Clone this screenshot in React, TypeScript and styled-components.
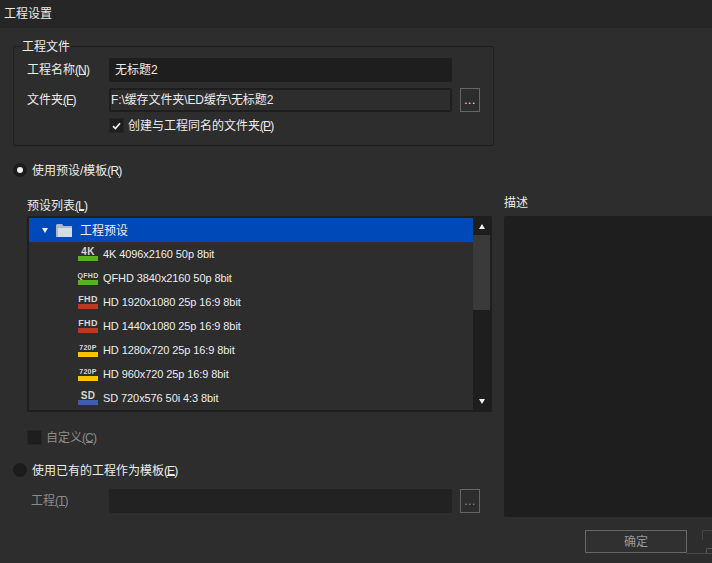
import React from 'react';
import styled, { createGlobalStyle } from 'styled-components';

const FONT = '"Liberation Sans", "Noto Sans CJK SC", sans-serif';

const GlobalStyle = createGlobalStyle`
  html, body {
    margin: 0;
    padding: 0;
    background: #2d2d2d;
  }
  * { box-sizing: border-box; }
`;

const Dialog = styled.div`
  position: relative;
  width: 712px;
  height: 563px;
  overflow: hidden;
  background: #2d2d2d;
  color: #ececec;
  font-family: ${FONT};
  font-size: 12px;
  line-height: 14px;
`;

const TitleBar = styled.div`
  height: 28px;
  padding: 7px 4px 0;
  background: #262626;
  color: #ececec;
`;

const Body = styled.div`
  display: grid;
  grid-template-columns: 479px 208px;
  column-gap: 12px;
  padding-left: 13px;
  height: 489px;
`;

const LeftColumn = styled.div`
  display: flex;
  flex-direction: column;
  padding-top: 11px;
`;

const RightColumn = styled.div`
  display: flex;
  flex-direction: column;
  padding-top: 167px;
`;

const Group = styled.fieldset`
  margin: 0;
  height: 107px;
  padding: 5px 13px 0;
  border: 1px solid #1e1e1e;
  border-radius: 2px;
`;

const Legend = styled.legend`
  margin-left: -5px;
  padding: 1px 0 0;
  height: 14px;
  line-height: 14px;
  color: #ececec;
`;

const FieldRow = styled.div<{ $indent?: number; $top?: number }>`
  display: grid;
  grid-template-columns: 74px 343px 20px;
  column-gap: 8px;
  align-items: center;
  height: 24px;
  margin-top: ${p => p.$top || 0}px;
  margin-bottom: 6px;
  padding-left: ${p => p.$indent || 0}px;
`;

const FieldLabel = styled.label<{ $muted?: boolean; $inset?: number }>`
  padding-left: ${p => p.$inset || 0}px;
  color: ${p => (p.$muted ? '#8c8c8c' : '#ececec')};
`;

// the "(N)" access key after a label, set tighter than the label itself
const Mnemonic = styled.span`
  letter-spacing: -0.9px;
  text-decoration: underline;
  text-decoration-thickness: 1px;
  text-underline-offset: 0;
`;

const Input = styled.div<{ $framed?: boolean; $dim?: boolean }>`
  display: flex;
  align-items: center;
  height: 24px;
  padding-left: ${p => (p.$framed ? '0' : '6px')};
  background: ${p => (p.$framed ? 'transparent' : p.$dim ? '#222222' : '#1e1e1e')};
  border: ${p => (p.$framed ? '2px solid #1e1e1e' : 'none')};
  border-radius: 2px;
  color: #ececec;
  letter-spacing: ${p => (p.$framed ? '-0.1px' : '0')};
  white-space: nowrap;
`;

const BrowseButton = styled.button<{ $muted?: boolean }>`
  width: 20px;
  height: 24px;
  padding: 0;
  background: transparent;
  border: 1px solid #666666;
  color: ${p => (p.$muted ? '#8c8c8c' : '#ececec')};
  font-family: ${FONT};
  font-size: 12px;
  letter-spacing: 0.5px;
  line-height: 14px;
`;

const CheckRow = styled.div<{ $muted?: boolean; $left?: number; $top?: number }>`
  display: flex;
  align-items: center;
  gap: 4px;
  height: 15px;
  margin-left: ${p => p.$left || 0}px;
  margin-top: ${p => p.$top || 0}px;
  color: ${p => (p.$muted ? '#8c8c8c' : '#ececec')};
`;

const RowText = styled.span`
  padding-top: 1px;
`;

const CheckBox = styled.span`
  display: flex;
  align-items: center;
  justify-content: center;
  width: 15px;
  height: 15px;
  background: #1e1e1e;
  border: 1px solid #262626;
`;

const RadioRow = styled.div<{ $top: number }>`
  display: flex;
  align-items: center;
  gap: 5px;
  height: 14px;
  margin-top: ${p => p.$top}px;
`;

const Radio = styled.span`
  display: flex;
  align-items: center;
  justify-content: center;
  width: 14px;
  height: 14px;
  border-radius: 50%;
  background: #1c1c1c;
`;

const RadioDot = styled.span`
  width: 6px;
  height: 6px;
  border-radius: 50%;
  background: #f0f0f0;
`;

const ListLabel = styled.div`
  margin: 22px 0 3px 14px;
  height: 14px;
`;

const ListBox = styled.div`
  display: flex;
  width: 465px;
  height: 196px;
  margin-left: 14px;
  padding: 2px;
  background: #1e1e1e;
  border-radius: 2px;
`;

const Rows = styled.div`
  flex: 1;
  background: #2d2d2d;
`;

const FolderRow = styled.div`
  display: flex;
  align-items: center;
  height: 24px;
  padding-left: 13px;
  background: #0049b8;
  color: #f0f0f0;
`;

const Arrow = styled.span<{ $down?: boolean }>`
  width: 0;
  height: 0;
  border-left: 3.5px solid transparent;
  border-right: 3.5px solid transparent;
  ${p => (p.$down ? 'border-top: 5px solid #f0f0f0;' : 'border-bottom: 5px solid #f0f0f0;')}
`;

const FolderIcon = styled.svg`
  margin: 0 8px;
`;

const PresetRow = styled.div`
  display: flex;
  align-items: center;
  height: 24px;
  padding-left: 49px;
  color: #ececec;
  font-size: 11px;
  letter-spacing: -0.09px;
  white-space: nowrap;
`;

const Badge = styled.span`
  display: flex;
  flex-direction: column;
  align-items: center;
  width: 20px;
  height: 14px;
  margin-right: 5px;
`;

const BadgeText = styled.span<{ $size: number }>`
  height: 9px;
  color: #d8d8d8;
  font-size: ${p => p.$size}px;
  font-weight: 700;
  letter-spacing: 0.3px;
  line-height: 9px;
`;

const BadgeBar = styled.span<{ $color: string }>`
  flex: none;
  width: 20px;
  height: 5px;
  background: ${p => p.$color};
`;

const ScrollBar = styled.div`
  display: flex;
  flex-direction: column;
  width: 17px;
`;

const ScrollButton = styled.div`
  display: flex;
  align-items: center;
  justify-content: center;
  height: 17px;
`;

const ScrollThumb = styled.div`
  height: 75px;
  background: #3a3a3a;
`;

const ScrollTrack = styled.div`
  flex: 1;
`;

const DescriptionLabel = styled.div`
  height: 14px;
  margin: 1px 0 6px;
`;

const DescriptionPanel = styled.div`
  height: 301px;
  background: #1e1e1e;
  border-radius: 2px 0 0 2px;
`;

const Footer = styled.div`
  display: flex;
  justify-content: flex-end;
  padding: 13px 25px 0 0;
`;

const ConfirmButton = styled.button`
  width: 102px;
  height: 23px;
  padding: 1px 0 0;
  background: #303030;
  border: 1px solid #666666;
  color: #999999;
  font-family: ${FONT};
  font-size: 12px;
  line-height: 14px;
`;

const ResizeGrip = styled.svg`
  position: absolute;
  right: 0;
  top: 530px;
`;

const presets = [
  { badge: '4K', size: 10, color: '#5cb01f', name: '4K 4096x2160 50p 8bit' },
  { badge: 'QFHD', size: 7, color: '#5cb01f', name: 'QFHD 3840x2160 50p 8bit' },
  { badge: 'FHD', size: 9, color: '#bb372a', name: 'HD 1920x1080 25p 16:9 8bit' },
  { badge: 'FHD', size: 9, color: '#bb372a', name: 'HD 1440x1080 25p 16:9 8bit' },
  { badge: '720P', size: 7, color: '#f7c400', name: 'HD 1280x720 25p 16:9 8bit' },
  { badge: '720P', size: 7, color: '#f7c400', name: 'HD 960x720 25p 16:9 8bit' },
  { badge: 'SD', size: 10, color: '#3f5cae', name: 'SD 720x576 50i 4:3 8bit' },
];

export default function App() {
  return (
    <Dialog>
      <GlobalStyle />
      <TitleBar>工程设置</TitleBar>
      <Body>
        <LeftColumn>
          <Group>
            <Legend>工程文件</Legend>
            <FieldRow>
              <FieldLabel>工程名称<Mnemonic>(N)</Mnemonic></FieldLabel>
              <Input>无标题2</Input>
            </FieldRow>
            <FieldRow>
              <FieldLabel>文件夹<Mnemonic>(F)</Mnemonic></FieldLabel>
              <Input $framed>F:\缓存文件夹\ED缓存\无标题2</Input>
              <BrowseButton>...</BrowseButton>
            </FieldRow>
            <CheckRow $left={82}>
              <CheckBox>
                <svg width="9" height="8" viewBox="0 0 9 8">
                  <path d="M1 4.2 L3.4 6.5 L8 1.2" fill="none" stroke="#f0f0f0" strokeWidth="1.7" />
                </svg>
              </CheckBox>
              <RowText>创建与工程同名的文件夹<Mnemonic>(P)</Mnemonic></RowText>
            </CheckRow>
          </Group>

          <RadioRow $top={17}>
            <Radio><RadioDot /></Radio>
            <RowText>使用预设/模板<Mnemonic>(R)</Mnemonic></RowText>
          </RadioRow>

          <ListLabel>预设列表<Mnemonic>(L)</Mnemonic></ListLabel>
          <ListBox>
            <Rows>
              <FolderRow>
                <Arrow $down />
                <FolderIcon width="16" height="13" viewBox="0 0 16 13">
                  <path d="M0 1.5 Q0 0 1.5 0 H6 L7.5 2 H16 V13 H0 Z" fill="#aeb9c8" />
                  <path d="M2 4 H16 V13 H2 Z" fill="#d6dce4" />
                </FolderIcon>
                <RowText>工程预设</RowText>
              </FolderRow>
              {presets.map(p => (
                <PresetRow key={p.name}>
                  <Badge>
                    <BadgeText $size={p.size}>{p.badge}</BadgeText>
                    <BadgeBar $color={p.color} />
                  </Badge>
                  {p.name}
                </PresetRow>
              ))}
            </Rows>
            <ScrollBar>
              <ScrollButton><Arrow /></ScrollButton>
              <ScrollThumb />
              <ScrollTrack />
              <ScrollButton><Arrow $down /></ScrollButton>
            </ScrollBar>
          </ListBox>

          <CheckRow $muted $left={14} $top={18}>
            <CheckBox />
            <RowText>自定义<Mnemonic>(C)</Mnemonic></RowText>
          </CheckRow>

          <RadioRow $top={18}>
            <Radio />
            <RowText>使用已有的工程作为模板<Mnemonic>(E)</Mnemonic></RowText>
          </RadioRow>

          <FieldRow $indent={14} $top={12}>
            <FieldLabel $muted $inset={4}>工程<Mnemonic>(T)</Mnemonic></FieldLabel>
            <Input $dim />
            <BrowseButton $muted>...</BrowseButton>
          </FieldRow>
        </LeftColumn>

        <RightColumn>
          <DescriptionLabel>描述</DescriptionLabel>
          <DescriptionPanel />
        </RightColumn>
      </Body>
      <Footer>
        <ConfirmButton>确定</ConfirmButton>
      </Footer>
      <ResizeGrip width="25" height="26" viewBox="0 0 25 26">
        <path d="M15.5 0.5 H25 M15.5 0.5 V10" stroke="#444" fill="none" />
        <path d="M19.5 18.5 H25 M19.5 18.5 V23" stroke="#555" fill="none" />
        <path d="M0 23.5 H25" stroke="#4a4a4a" />
      </ResizeGrip>
    </Dialog>
  );
}
